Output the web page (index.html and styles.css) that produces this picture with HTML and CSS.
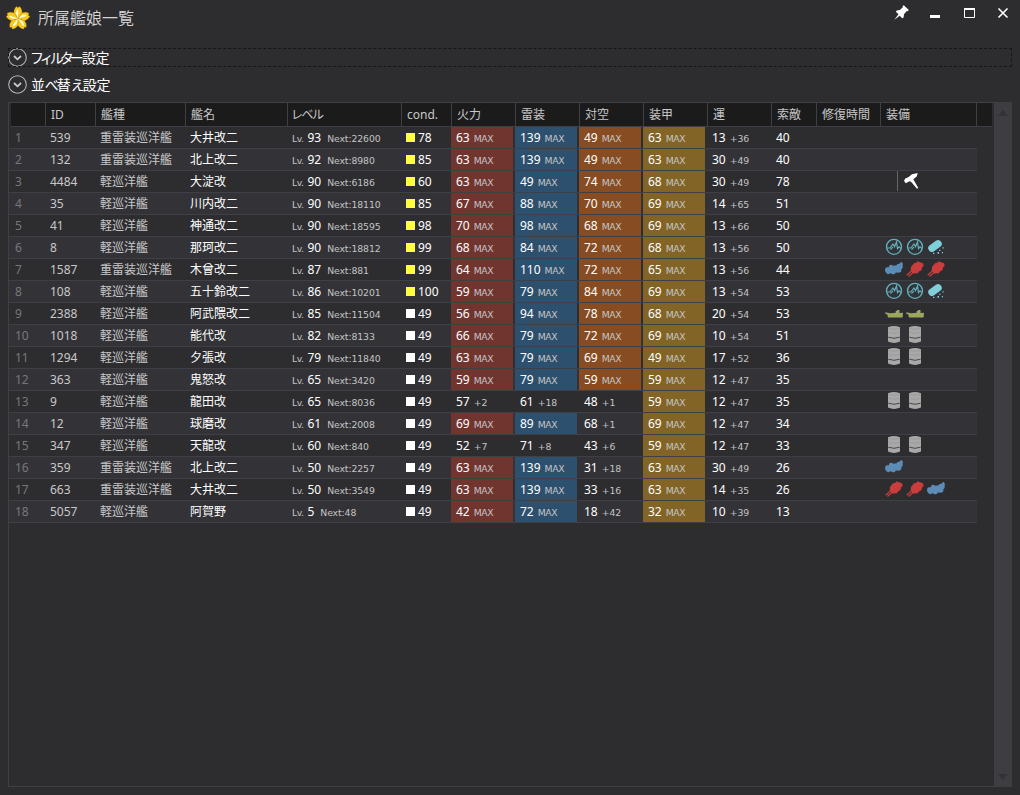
FILE: index.html
```html
<!DOCTYPE html>
<html lang="ja">
<head>
    <meta charset="UTF-8">
    <meta name="viewport" content="width=device-width, initial-scale=1.0">
    <title>所属艦娘一覧</title>
    <link rel="stylesheet" href="styles.css">
</head>
<body>
    <svg class="defs" width="0" height="0">
        <symbol id="sonar" viewBox="0 0 18 20">
            <circle cx="9" cy="9.8" r="7.5" fill="none" stroke="#62b0bc" stroke-width="1.3"/>
            <path d="M1.800 11h3L8 7l1.600 2.600L11.500 5l1 6.600L14 9.800l2 1.700M5.500 12.600L8 9.800" fill="none" stroke="#62b0bc" stroke-width="1.2"/>
        </symbol>
        <symbol id="depth" viewBox="0 0 18 20">
            <rect x="0.6" y="5.300" width="14.800" height="7.400" rx="3.600" transform="rotate(-36 8 9)" fill="#7fd0da"/>
            <path d="M6 15.700h1.400V17H6zM10.500 15H12v1.700h-1.500zM14.900 15H16v1.300h-1.100zM12.200 12.700h1.200v1.200h-1.200zM15.500 10.200h1.200v1.200h-1.200z" fill="#7fd0da"/>
        </symbol>
        <symbol id="sub" viewBox="0 0 18 20">
            <path d="M.3 9.300l1.500-1 2-.1L4.600 6l1.900-.3 1.800 1.100 3.400-.5.600-1.300 2.300-.3.700-1.200 1.300-.5 1.200 1.500-.2 4.500-1.200 1.200-.2 2.500-2.500 1-2.700-.2-1.700 1.800-1.700-.1-2-.9-2.500 1-1.700-1L0 12z" fill="#5c8cb5"/>
        </symbol>
        <symbol id="torpedo" viewBox="0 0 18 20">
            <path d="M5 8l3-3.700 2.500-.6 1-1.400 2.500 1 3 1 .7 2.700-1.700 1.500-.6 2.700-2.500 1.300-1 1.800-5 .2-2.200-3z" fill="#cb3d3d"/>
            <path d="M.7 16.300l5.500-5M2.500 17.500l5.300-4.700" stroke="#cb3d3d" stroke-width="1.200"/>
        </symbol>
        <symbol id="boat" viewBox="0 0 18 20">
            <path d="M.3 9.300l5 .9 5.400-.4V7.900l1.300-.2V7h2.500v2.900l3.500-.2-.4 4.800H3l-.7-3-2-.8z" fill="#9ca65c"/>
        </symbol>
        <symbol id="drum" viewBox="0 0 18 20">
            <path d="M3 2.300Q9-.3 15 2.300v14.200q-6 2.900-12 0z" fill="#a8a8a8"/>
            <path d="M3.300 12.200q5.700 2.200 11.400 0" fill="none" stroke="#48484c" stroke-width="1"/>
            <path d="M3.500 7.500q5.500 1.500 11 0M3.500 3.500q5.500 1.500 11 0" fill="none" stroke="#939393" stroke-width=".6"/>
        </symbol>
        <symbol id="hammer" viewBox="1 0 25 20">
            <path d="M7 9.700l1.300-2.200 3-1.200L15 3.300 20.700 2l-1 3.500-3.400 2.800 5 8.800-1.300.6-6-7-1.500-.4-3.800 2z" fill="#fff"/>
        </symbol>
    </svg>

    <header class="titlebar">
        <svg class="logo" viewBox="0 0 24 24">
            <defs>
                <path id="petal" d="M12 12.500L8 7.200Q7.700 3 10.500.5l1.500 1.300L13.500.5Q16.300 3 16 7.200z"/>
                <path id="shine" d="M12 12.500L9.900 7.200 11 3.200l1.300 1z"/>
            </defs>
            <g fill="#f9cb1d" stroke="#b88a14" stroke-width=".3">
                <use href="#petal"/>
                <use href="#petal" transform="rotate(72 12 12.500)"/>
                <use href="#petal" transform="rotate(144 12 12.500)"/>
                <use href="#petal" transform="rotate(216 12 12.500)"/>
                <use href="#petal" transform="rotate(288 12 12.500)"/>
            </g>
            <g fill="#fffbe6">
                <use href="#shine"/>
                <use href="#shine" transform="rotate(72 12 12.500)"/>
                <use href="#shine" transform="rotate(144 12 12.500)"/>
                <use href="#shine" transform="rotate(216 12 12.500)"/>
                <use href="#shine" transform="rotate(288 12 12.500)"/>
            </g>
        </svg>
        <h1>所属艦娘一覧</h1>
        <div class="window-buttons">
            <svg viewBox="2 0 34 26"><path d="M14.300 19.800l4.200-5.600-2.700-2.400 1-1.400 3-.4 3-2.800V5.600l1.200-.2 4.600 4.300-.4 1.200-1.700.3-2.500 3-.4 3.200-1.400.8-2.500-2.400z" fill="#fff"/></svg>
            <svg viewBox="0 0 34 26"><path d="M14 15h10v3H14z" fill="#fff"/></svg>
            <svg viewBox="0 0 34 26"><path d="M14.500 9v8.500h10V9" fill="none" stroke="#fff"/><path d="M14 8h11v2H14z" fill="#fff"/></svg>
            <svg viewBox="0 0 34 26"><path d="M14.500 8.500l9 9M23.500 8.500l-9 9" stroke="#fff" stroke-width="1.600"/></svg>
        </div>
    </header>

    <main>
        <div class="expander focused">
            <svg viewBox="0 0 19 19"><circle cx="9.500" cy="9.500" r="8.800" fill="none" stroke="#b4b4b6" stroke-width="1.100"/><path d="M6 8l3.500 3.300L13 8" fill="none" stroke="#ccc" stroke-width="1.800"/></svg>
            <span><span class="kana filter">フィルター</span>設定</span>
        </div>
        <div class="expander">
            <svg viewBox="0 0 19 19"><circle cx="9.500" cy="9.500" r="8.800" fill="none" stroke="#b4b4b6" stroke-width="1.100"/><path d="M6 8l3.500 3.300L13 8" fill="none" stroke="#ccc" stroke-width="1.800"/></svg>
            <span>並<span class="kana">べ</span>替<span class="kana">え</span>設定</span>
        </div>

        <div class="ship-list">
            <div class="list-body">
                <div class="row head">
                    <div></div><div>ID</div><div>艦種</div><div>艦名</div><div><span class="level-head">レベル</span></div><div>cond.</div>
                    <div>火力</div><div>雷装</div><div>対空</div><div>装甲</div><div>運</div><div>索敵</div><div>修復時間</div><div>装備</div><div></div>
                </div>
                <div id="ships"></div>
            </div>
            <div class="scrollbar">
                <svg viewBox="0 0 10 6"><path d="M0 6l5-6 5 6z" fill="#333337"/></svg>
                <svg viewBox="0 0 10 6"><path d="M0 0l5 6 5-6z" fill="#333337"/></svg>
            </div>
        </div>
    </main>

    <script>
        const CL = '軽巡洋艦';
        const CLT = '重雷装巡洋艦';
        const M = 'MAX';

        // id, type, name, level, next, cond, firepower, torpedo, AA, armor, luck, search, equipment
        const ships = [
            [539, CLT, '大井改二', 93, 22600, 78, [63, M], [139, M], [49, M], [63, M], [13, '+36'], 40],
            [132, CLT, '北上改二', 92, 8980, 85, [63, M], [139, M], [49, M], [63, M], [30, '+49'], 40],
            [4484, CL, '大淀改', 90, 6186, 60, [63, M], [49, M], [74, M], [68, M], [30, '+49'], 78, 'hammer'],
            [35, CL, '川内改二', 90, 18110, 85, [67, M], [88, M], [70, M], [69, M], [14, '+65'], 51],
            [41, CL, '神通改二', 90, 18595, 98, [70, M], [98, M], [68, M], [69, M], [13, '+66'], 50],
            [8, CL, '那珂改二', 90, 18812, 99, [68, M], [84, M], [72, M], [68, M], [13, '+56'], 50, 'sonar sonar depth'],
            [1587, CLT, '木曾改二', 87, 881, 99, [64, M], [110, M], [72, M], [65, M], [13, '+56'], 44, 'sub torpedo torpedo'],
            [108, CL, '五十鈴改二', 86, 10201, 100, [59, M], [79, M], [84, M], [69, M], [13, '+54'], 53, 'sonar sonar depth'],
            [2388, CL, '阿武隈改二', 85, 11504, 49, [56, M], [94, M], [78, M], [68, M], [20, '+54'], 53, 'boat boat'],
            [1018, CL, '能代改', 82, 8133, 49, [66, M], [79, M], [72, M], [69, M], [10, '+54'], 51, 'drum drum'],
            [1294, CL, '夕張改', 79, 11840, 49, [63, M], [79, M], [69, M], [49, M], [17, '+52'], 36, 'drum drum'],
            [363, CL, '鬼怒改', 65, 3420, 49, [59, M], [79, M], [59, M], [59, M], [12, '+47'], 35],
            [9, CL, '龍田改', 65, 8036, 49, [57, '+2'], [61, '+18'], [48, '+1'], [59, M], [12, '+47'], 35, 'drum drum'],
            [12, CL, '球磨改', 61, 2008, 49, [69, M], [89, M], [68, '+1'], [69, M], [12, '+47'], 34],
            [347, CL, '天龍改', 60, 840, 49, [52, '+7'], [71, '+8'], [43, '+6'], [59, M], [12, '+47'], 33, 'drum drum'],
            [359, CLT, '北上改二', 50, 2257, 49, [63, M], [139, M], [31, '+18'], [63, M], [30, '+49'], 26, 'sub'],
            [663, CLT, '大井改二', 50, 3549, 49, [63, M], [139, M], [33, '+16'], [63, M], [14, '+35'], 26, 'torpedo torpedo sub'],
            [5057, CL, '阿賀野', 5, 48, 49, [42, M], [72, M], [18, '+42'], [32, M], [10, '+39'], 13]
        ];

        function stat(value, kind) {
            const max = value[1] === M ? ' max' : '';
            return `<div class="stat ${kind}${max}">${value[0]}<small>${value[1]}</small></div>`;
        }

        function equip(list) {
            if (!list) return '';
            return list.split(' ').map(n => `<svg class="icon ${n}"><use href="#${n}"/></svg>`).join('');
        }

        document.getElementById('ships').innerHTML = ships.map((s, i) => `
            <div class="row ship">
                <div class="index">${i + 1}</div>
                <div>${s[0]}</div>
                <div>${s[1]}</div>
                <div class="name">${s[2]}</div>
                <div class="level"><small>Lv.</small>${s[3]}<small class="next">Next:${s[4]}</small></div>
                <div class="cond"><i class="${s[5] > 49 ? 'high' : ''}"></i>${s[5]}</div>
                ${stat(s[6], 'fire')}${stat(s[7], 'torp')}${stat(s[8], 'air')}${stat(s[9], 'armor')}${stat(s[10], 'luck')}
                <div class="name">${s[11]}</div>
                <div></div>
                <div class="equip">${equip(s[12])}</div>
            </div>`).join('');
    </script>
</body>
</html>
```

FILE: styles.css
```css
:root {
    --bg: #2d2d30;
    --row-alt: #333337;
    --line: #3f3f46;
    --head-bg: #1b1b1c;
    --text: #c8c8c8;
    --index: #77777b;
}

* {
    box-sizing: border-box;
}

body {
    margin: 0;
    width: 1020px;
    height: 795px;
    overflow: hidden;
    background: var(--bg);
    color: var(--text);
    font-family: "Noto Sans", "Noto Sans CJK JP", sans-serif;
    font-size: 12px;
    display: flex;
    flex-direction: column;
}

.defs {
    display: none;
}

.titlebar {
    height: 48px;
    display: flex;
    align-items: flex-start;
    padding-left: 6px;
}

.logo {
    width: 24px;
    height: 24px;
    margin-top: 6px;
}

h1 {
    margin: 6px 0 0 8px;
    font-size: 16px;
    line-height: 24px;
    font-weight: 350;
    color: #d6d6d6;
}

.window-buttons {
    display: flex;
    margin: 0 2px 0 auto;
}

.window-buttons svg {
    width: 34px;
    height: 26px;
}

main {
    flex: 1;
    display: flex;
    flex-direction: column;
    padding: 0 8px 8px;
}

.expander {
    height: 19px;
    margin-bottom: 8px;
    display: flex;
    align-items: center;
    gap: 4px;
    font-size: 14px;
    line-height: 20px;
    color: #fff;
    letter-spacing: -0.2px;
}

.expander.focused {
    gap: 3px;
    outline: 1px dashed #161618;
    outline-offset: -1px;
}

.expander svg {
    width: 19px;
    height: 19px;
}

.kana {
    letter-spacing: -2px;
}

.kana.filter {
    letter-spacing: -4px;
    margin-right: 2px;
}

.ship-list {
    flex: 1;
    display: flex;
    justify-content: space-between;
    border: solid var(--line);
    border-width: 1px 0 1px 1px;
}

.list-body {
    width: 983px;
}

.row {
    display: grid;
    grid-template-columns: 36px 50px 90px 102px 114px 50px 64px 64px 64px 64px 64px 45px 64px 96px 16px;
    line-height: 21px;
    white-space: nowrap;
}

.row > div {
    padding-left: 5px;
}

.head {
    height: 24px;
    line-height: 23px;
    margin-left: 2px;
    grid-template-columns: 34px 50px 90px 102px 114px 50px 64px 64px 64px 64px 64px 45px 64px 96px 16px;
    background: var(--head-bg);
    border-bottom: 1px solid var(--line);
}

.head > div + div {
    border-left: 1px solid var(--line);
}

.level-head {
    margin-left: -2px;
    letter-spacing: -1.5px;
}

.ship {
    height: 22px;
    width: 968px;
    grid-template-columns: 36px 50px 90px 102px 114px 50px 64px 64px 64px 64px 64px 45px 64px 97px;
    border-bottom: 1px solid var(--line);
}

.ship:nth-child(even) {
    background: var(--row-alt);
}

.ship .index {
    padding-left: 6px;
    color: var(--index);
}

.name, .level, .cond, .stat {
    color: #fff;
}

small {
    font-family: "DejaVu Sans", "Noto Sans", sans-serif;
    font-size: 9.3px;
    line-height: 1;
    color: #c4c4c4;
    letter-spacing: -0.1px;
}

.level small {
    margin-right: 4px;
    letter-spacing: -0.5px;
}

.level small.next {
    margin: 0 0 0 6px;
    letter-spacing: -0.1px;
}

.cond i {
    display: inline-block;
    width: 9px;
    height: 9px;
    margin-right: 3px;
    background: #fff;
}

.cond i.high {
    background: #ffff40;
}

.stat {
    margin-right: 2px;
}

.stat small {
    margin-left: 4px;
}

.stat.max small {
    letter-spacing: -0.4px;
}

.fire.max {
    background: #713530;
}

.torp.max {
    background: #2d506e;
}

.air.max {
    background: #874c21;
}

.armor.max {
    background: #826426;
}

.equip {
    display: flex;
    align-items: flex-start;
    gap: 3px;
}

.icon {
    width: 18px;
    height: 20px;
}

.icon.hammer {
    width: 26px;
    margin-left: 12px;
    border-left: 1px solid #666;
}

.scrollbar {
    width: 18px;
    margin: -1px 0;
    padding: 8px 0 7px;
    background: #3e3e42;
    display: flex;
    flex-direction: column;
    align-items: center;
    justify-content: space-between;
}

.scrollbar svg {
    width: 10px;
    height: 6px;
}
```
